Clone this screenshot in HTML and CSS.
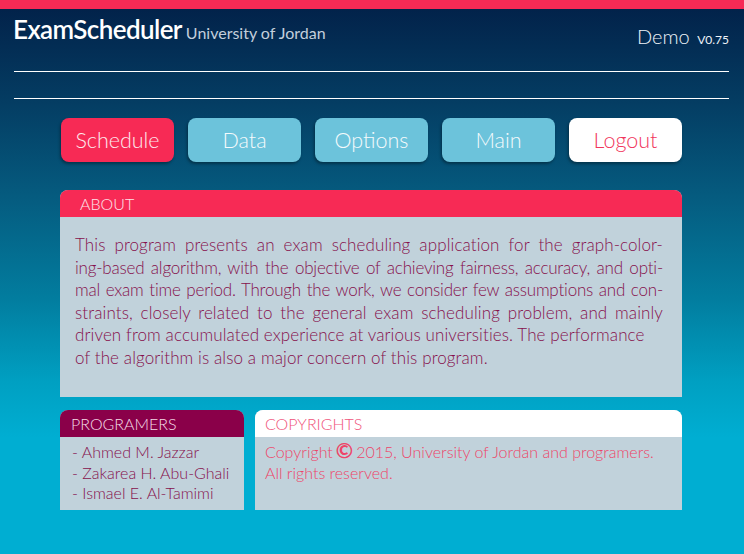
FILE: index.html
```html
<!DOCTYPE html>
<html lang="en">
<head>
<meta charset="utf-8">
<title>ExamScheduler</title>
<link rel="stylesheet" href="styles.css">
</head>
<body>
<div class="topbar"></div>
<header class="masthead">
  <div class="brand"><span class="logo">ExamScheduler</span><span class="uni">University of Jordan</span></div>
  <div class="demo">Demo <span class="ver">V0.75</span></div>
</header>
<div class="rule rule-a"></div>
<div class="rule rule-b"></div>
<main class="content">
  <nav class="nav">
    <a class="btn btn-active">Schedule</a>
    <a class="btn">Data</a>
    <a class="btn">Options</a>
    <a class="btn">Main</a>
    <a class="btn btn-logout">Logout</a>
  </nav>
  <section class="panel about">
    <h2 class="panel-head head-red">ABOUT</h2>
    <div class="panel-body about-body">
      <span class="ln j">This program presents an exam scheduling application for the graph-color-</span>
      <span class="ln j tight">ing-based algorithm, with the objective of achieving fairness, accuracy, and opti-</span>
      <span class="ln j tight">mal exam time period. Through the work, we consider few assumptions and con-</span>
      <span class="ln j">straints, closely related to the general exam scheduling problem, and mainly</span>
      <span class="ln">driven from accumulated experience at various universities. The performance</span>
      <span class="ln">of the algorithm is also a major concern of this program.</span>
    </div>
  </section>
  <div class="row">
    <section class="panel programers">
      <h2 class="panel-head head-maroon">PROGRAMERS</h2>
      <ul class="panel-body list">
        <li>- Ahmed M. Jazzar</li>
        <li>- Zakarea H. Abu-Ghali</li>
        <li>- Ismael E. Al-Tamimi</li>
      </ul>
    </section>
    <section class="panel copyrights">
      <h2 class="panel-head head-white">COPYRIGHTS</h2>
      <div class="panel-body copy">
        <p>Copyright<span class="c">©</span>2015, University of Jordan and programers.</p>
        <p>All rights reserved.</p>
      </div>
    </section>
  </div>
</main>
</body>
</html>
```
FILE: styles.css
```css
* { box-sizing: border-box; }
html, body { margin: 0; padding: 0; }
body {
  width: 744px;
  height: 554px;
  overflow: hidden;
  font-family: "Lato", "Liberation Sans", sans-serif;
  background: linear-gradient(180deg, #022048 0%, #043c62 18%, #055c80 36%, #027d9f 54%, #00a0c2 69%, #00aed2 79%, #00aed2 100%);
  color: #fff;
}
.topbar { height: 9px; background: #f72a55; }
.masthead {
  height: 62px;
  display: flex;
  justify-content: space-between;
  align-items: flex-start;
  padding: 0 15px 0 13px;
}
.brand { padding-top: 5px; display: flex; align-items: baseline; }
.logo { font-size: 26px; line-height: 30px; font-weight: 600; letter-spacing: -0.6px; }
.uni { font-size: 16px; color: #c3cfdc; margin-left: 4px; font-weight: 400; }
.demo { padding-top: 14px; font-size: 20px; line-height: 26px; color: #eef3f8; font-weight: 300; }
.ver { font-size: 12px; margin-left: 2px; font-weight: 400; }
.rule { height: 1px; background: #fff; margin: 0 15px 0 14px; }
.rule-b { margin-top: 26px; }
.content { width: 622px; margin: 19px 0 0 60px; }
.nav { display: flex; justify-content: space-between; padding-left: 1px; }
.btn {
  width: 113px;
  height: 44px;
  border-radius: 8px;
  background: #6cc3db;
  color: #f4fafc;
  font-size: 21.5px;
  line-height: 44px;
  text-align: center;
  font-weight: 300;
  box-shadow: -1px 2px 3px rgba(0, 0, 0, 0.35);
}
.btn-active { background: #f72a55; color: #fde8ec; }
.btn-logout { background: #fff; color: #f1355c; }
.panel { background: #c1d2db; }
.about { margin-top: 28px; height: 207px; border-radius: 8px 8px 0 0; }
.panel-head {
  margin: 0;
  height: 27px;
  font-size: 16px;
  font-weight: 300;
  line-height: 27px;
  border-radius: 8px 8px 0 0;
}
.head-red { background: #f72a55; color: #fde3e9; padding-left: 20px; }
.head-maroon { background: #8a0049; color: #f3dde7; padding-left: 11px; }
.head-white { background: #fff; color: #f0537a; padding-left: 10px; }
.about-body {
  padding: 17px 19px 0 15px;
  font-size: 17px;
  line-height: 22.5px;
  letter-spacing: 0.1px;
  font-weight: 300;
  color: #86104c;
}
.ln { display: block; text-align: left; }
.j { text-align: justify; text-align-last: justify; }
.tight { letter-spacing: -0.2px; word-spacing: -1.5px; }
.row { display: flex; justify-content: space-between; margin-top: 13px; }
.programers { width: 184px; height: 100px; border-radius: 8px 8px 0 0; }
.copyrights { width: 427px; height: 100px; border-radius: 8px 8px 0 0; }
.list {
  list-style: none;
  margin: 0;
  padding: 5px 0 0 12px;
  font-size: 16px;
  line-height: 20.5px;
  font-weight: 300;
  color: #86104c;
}
.copy { padding: 5px 0 0 10px; font-size: 16px; line-height: 20.5px; color: #ee4468; font-weight: 300; }
.copy p { margin: 0; }
.c { display: inline-block; font-size: 21px; line-height: 16px; margin: 0 3px 0 3px; font-weight: 700; }
```
